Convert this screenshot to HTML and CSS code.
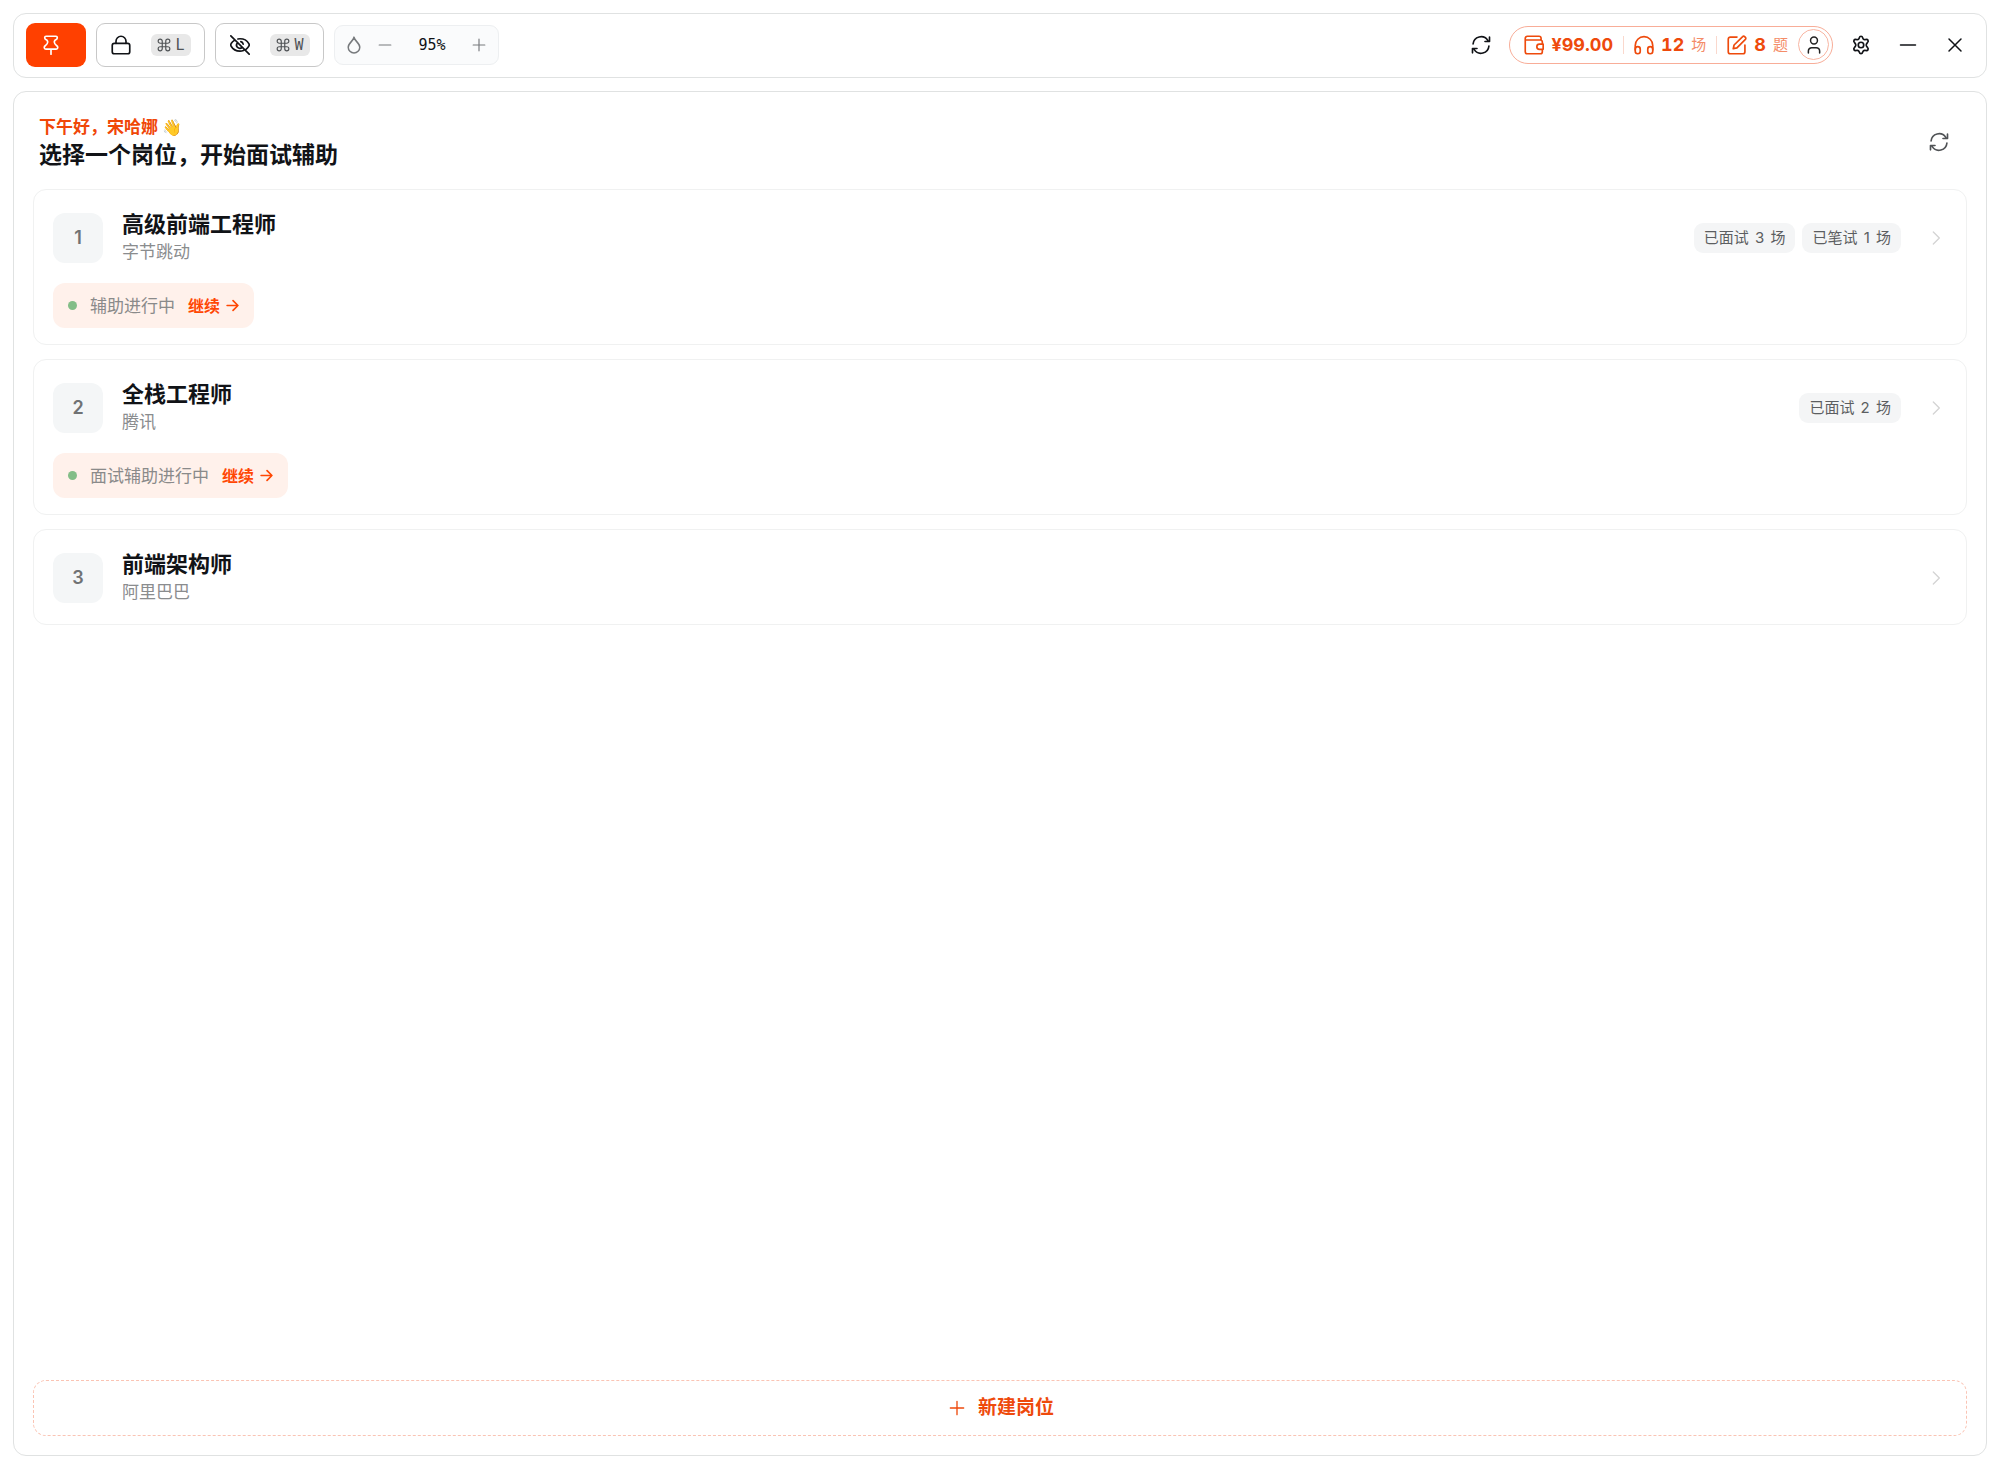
FILE: index.html
```
<!DOCTYPE html>
<html lang="zh-CN">
<head>
<meta charset="utf-8">
<meta name="viewport" content="width=device-width, initial-scale=1">
<title>面试辅助</title>
<link rel="stylesheet" href="styles.css">
</head>
<body>
<svg class="sprite" aria-hidden="true">
  <symbol id="refresh" viewBox="0 0 24 24"><path d="M2.500 10.800a9.600 9.600 0 0 1 17.600-4.400M21.500 13.200a9.600 9.600 0 0 1-17.600 4.400M22.200 2.600v5.200h-5.400M1.800 21.400v-5.200h5.400"/></symbol>
  <symbol id="chevron" viewBox="0 0 24 24"><path d="m8 3 9 9-9 9"/></symbol>
  <symbol id="arrow" viewBox="0 0 24 24"><path d="M2 12h20M13 3l9 9-9 9"/></symbol>
  <symbol id="plus" viewBox="0 0 24 24"><path d="M12 2v20M2 12h20"/></symbol>
  <symbol id="minus" viewBox="0 0 24 24"><path d="M2 12h20"/></symbol>
  <symbol id="command" viewBox="0 0 24 24"><path d="M9 9V5.500A3.500 3.500 0 1 0 5.500 9h13A3.500 3.500 0 1 0 15 5.500v13a3.500 3.500 0 1 0 3.500-3.500h-13A3.500 3.500 0 1 0 9 18.500Z"/></symbol>
</svg>

<header class="toolbar">
  <div class="group">
    <button class="pin" type="button" aria-label="置顶">
      <svg class="icon icon-l" viewBox="0 0 24 24"><path d="M6 1.500h12c2 0 2 3.200.3 3.800-2 .7-2.500 1.400-2.300 3.400.2 1.800.9 2.800 2.600 3.900 2.200 1.500 2 4.400-.4 4.400H5.800c-2.400 0-2.600-2.900-.4-4.400C7.100 11.500 7.800 10.500 8 8.700c.2-2-.3-2.700-2.300-3.400C4 4.700 4 1.500 6 1.500ZM12 17v6"/></svg>
    </button>
    <button class="shortcut" type="button" aria-label="锁定">
      <svg class="icon icon-l" viewBox="0 0 24 24"><rect x="1.500" y="10" width="21" height="12.500" rx="2.500"/><path d="M6 10V7.500a6 6 0 0 1 12 0V10"/></svg>
      <kbd><svg class="icon cmd"><use href="#command"/></svg>L</kbd>
    </button>
    <button class="shortcut" type="button" aria-label="隐藏">
      <svg class="icon icon-l" viewBox="0 0 24 24"><path d="M1 1l22 22M9.500 4.800A11 11 0 0 1 12 4.500c5 0 9 3 10.600 5.800.6 1 .6 2 0 3A14 14 0 0 1 19.500 17M5.200 6.500a14 14 0 0 0-3.800 3.800c-.6 1-.6 2.200 0 3.200C3 16.300 7 19.300 12 19.300c1.500 0 2.900-.3 4.200-.8M9 9.500a3.800 3.800 0 0 0 5.500 5.300M13 8a3.800 3.800 0 0 1 2.800 3"/></svg>
      <kbd><svg class="icon cmd"><use href="#command"/></svg>W</kbd>
    </button>
    <div class="opacity" role="group" aria-label="透明度">
      <svg class="icon icon-m thin" viewBox="0 0 24 24"><path d="M12 1.500c.4 2.200 1.800 4 3.600 6 2.200 2.400 4.100 4.800 4.100 7.400a7.700 7.700 0 0 1-15.400 0c0-2.600 1.900-5 4.100-7.400 1.800-2 3.200-3.800 3.600-6Z"/></svg>
      <button class="step" type="button" aria-label="降低"><svg class="icon thin"><use href="#minus"/></svg></button>
      <output>95%</output>
      <button class="step" type="button" aria-label="提高"><svg class="icon thin"><use href="#plus"/></svg></button>
    </div>
  </div>

  <div class="group tools">
    <button class="tool" type="button" aria-label="刷新"><svg class="icon icon-l"><use href="#refresh"/></svg></button>
    <div class="account">
      <span class="stat">
        <svg class="icon icon-l" viewBox="0 0 24 24"><path d="M22 10V8.500a2.500 2.500 0 0 0-2.500-2.500H1.500M20.500 6V4a2.500 2.500 0 0 0-2.500-2.500H4A2.500 2.500 0 0 0 1.500 4v16A2.500 2.500 0 0 0 4 22.500h15.500A2.500 2.500 0 0 0 22 20v-2M23 11h-4.500a3 3 0 0 0 0 6.200H23z"/></svg>
        <b>¥99.00</b>
      </span>
      <span class="stat">
        <svg class="icon icon-l" viewBox="0 0 24 24"><path d="M1.500 18v-5.500a10.500 10.500 0 0 1 21 0V18"/><rect x="1.500" y="14" width="6" height="8.500" rx="3"/><rect x="16.500" y="14" width="6" height="8.500" rx="3"/></svg>
        <b>12</b><small>场</small>
      </span>
      <span class="stat">
        <svg class="icon icon-l" viewBox="0 0 24 24"><path d="M12 2.500H4A2.500 2.500 0 0 0 1.500 5v15A2.500 2.500 0 0 0 4 22.500h15a2.500 2.500 0 0 0 2.500-2.500v-8M7.500 16.500l1-4.500L18.800 1.900a1.600 1.600 0 0 1 2.300 0l1 1a1.600 1.600 0 0 1 0 2.300L11.900 15.500z"/></svg>
        <b>8</b><small>题</small>
      </span>
      <button class="avatar" type="button" aria-label="账户">
        <svg class="icon icon-m" viewBox="0 0 24 24"><circle cx="12" cy="6" r="4.600"/><path d="M4.500 22.500V20A4.500 4.500 0 0 1 9 15.500h6a4.500 4.500 0 0 1 4.500 4.500v2.500"/></svg>
      </button>
    </div>
    <button class="tool" type="button" aria-label="设置"><svg class="icon icon-l" viewBox="0 0 24 24"><path d="M12 1.500c1.600 0 1.800 1 2.200 2.300.4 1.300 1.700 2 3 1.700 1.400-.3 2.400-.6 3.200.8.8 1.400 0 2.100-.9 3.100-.9 1-1.300 1.500-1.300 2.600s.4 1.600 1.300 2.600c.9 1 1.700 1.700.9 3.100-.8 1.400-1.800 1.100-3.200.8-1.300-.3-2.600.4-3 1.700-.4 1.300-.6 2.300-2.200 2.300s-1.800-1-2.200-2.300c-.4-1.300-1.700-2-3-1.700-1.400.3-2.400.6-3.200-.8-.8-1.400 0-2.100.9-3.100.9-1 1.300-1.500 1.300-2.600S5.400 10.400 4.500 9.400c-.9-1-1.700-1.700-.9-3.100.8-1.400 1.800-1.100 3.200-.8 1.300.3 2.600-.4 3-1.700.4-1.300.6-2.300 2.200-2.300Z"/><circle cx="12" cy="12" r="3.300"/></svg></button>
    <button class="tool" type="button" aria-label="最小化"><svg class="icon icon-m"><use href="#minus"/></svg></button>
    <button class="tool" type="button" aria-label="关闭"><svg class="icon icon-m" viewBox="0 0 24 24"><path d="M4 4l16 16M20 4 4 20"/></svg></button>
  </div>
</header>

<main class="panel">
  <div class="heading">
    <div>
      <p class="greeting">下午好，宋哈娜 <span class="wave">👋</span></p>
      <h1>选择一个岗位，开始面试辅助</h1>
    </div>
    <button class="reload" type="button" aria-label="刷新岗位"><svg class="icon icon-l"><use href="#refresh"/></svg></button>
  </div>

  <ul class="jobs">
    <li class="job">
      <div class="row">
        <span class="index">1</span>
        <div class="name"><h2>高级前端工程师</h2><p>字节跳动</p></div>
        <span class="tag">已面试 <span class="count">3</span> 场</span>
        <span class="tag">已笔试 <span class="count">1</span> 场</span>
        <svg class="icon go"><use href="#chevron"/></svg>
      </div>
      <div class="status"><i class="dot"></i><span>辅助进行中</span><a href="#job-1">继续<svg class="icon arrow"><use href="#arrow"/></svg></a></div>
    </li>
    <li class="job">
      <div class="row">
        <span class="index">2</span>
        <div class="name"><h2>全栈工程师</h2><p>腾讯</p></div>
        <span class="tag">已面试 <span class="count">2</span> 场</span>
        <svg class="icon go"><use href="#chevron"/></svg>
      </div>
      <div class="status"><i class="dot"></i><span>面试辅助进行中</span><a href="#job-2">继续<svg class="icon arrow"><use href="#arrow"/></svg></a></div>
    </li>
    <li class="job">
      <div class="row">
        <span class="index">3</span>
        <div class="name"><h2>前端架构师</h2><p>阿里巴巴</p></div>
        <svg class="icon go"><use href="#chevron"/></svg>
      </div>
    </li>
  </ul>

  <button class="create" type="button"><svg class="icon icon-s"><use href="#plus"/></svg>新建岗位</button>
</main>
</body>
</html>
```
FILE: styles.css
```
* { box-sizing: border-box; margin: 0; padding: 0; }

body {
  min-height: 100vh;
  padding: 13px;
  display: flex;
  flex-direction: column;
  gap: 13px;
  background: #fff;
  color: #111317;
  font-family: Inter, "Noto Sans CJK SC", sans-serif;
  font-size: 17px;
  line-height: 24px;
}

button { font: inherit; color: inherit; background: none; border: 0; cursor: pointer; }

.sprite { display: none; }
.icon {
  width: 20px;
  height: 20px;
  flex: none;
  fill: none;
  stroke: currentColor;
  stroke-width: 2;
  stroke-linecap: round;
  stroke-linejoin: round;
}
.icon-m { width: 18px; height: 18px; }
.icon-s { width: 16px; height: 16px; }
.thin { stroke-width: 2; }

/* Top toolbar */
.toolbar {
  display: flex;
  justify-content: space-between;
  align-items: center;
  height: 65px;
  padding: 0 12px 2px;
  border: 1px solid #e0e2e2;
  border-radius: 13px;
}
.group { display: flex; align-items: center; gap: 10px; }

.pin, .shortcut {
  display: flex;
  align-items: center;
  height: 44px;
  border-radius: 9px;
}
.pin {
  width: 60px;
  padding-left: 15px;
  background: #ff4000;
  color: #fff;
}
.shortcut {
  justify-content: space-between;
  width: 109px;
  padding: 0 13px 0 14px;
  border: 1px solid #c8c8c8;
}
kbd {
  display: flex;
  align-items: center;
  justify-content: center;
  gap: 4px;
  width: 40px;
  height: 22px;
  border-radius: 6px;
  background: #e8e8e8;
  color: #505356;
  font: 15px/22px "DejaVu Sans Mono", monospace;
}
.cmd { width: 14px; height: 14px; }

.opacity {
  display: flex;
  align-items: center;
  height: 40px;
  width: 165px;
  padding: 0 10px;
  border: 1px solid #edeff1;
  border-radius: 9px;
  background: #fafbfc;
  color: #777a7d;
}
.step { display: flex; justify-content: center; width: 18px; }
.step .icon { width: 14px; height: 14px; }
.opacity .step:first-of-type { margin-left: 13px; }
.opacity output {
  flex: 1;
  text-align: center;
  color: #111317;
  font: 500 15px/20px "DejaVu Sans Mono", monospace;
}

.tools { gap: 9px; }
.tool { display: flex; align-items: center; justify-content: center; width: 38px; height: 38px; }

.account {
  display: flex;
  align-items: center;
  height: 38px;
  padding: 0 3px 0 14px;
  border: 1px solid #f8ad98;
  border-radius: 19px;
  color: #ee4a0c;
}
.stat { display: flex; align-items: center; gap: 7px; padding-right: 10px; }
.stat b { font-weight: 700; font-size: 18px; font-variant-numeric: tabular-nums; }
.stat small { font-size: 15px; color: #f48c68; }
.stat + .stat::before { content: ""; width: 1px; height: 18px; margin-right: 3px; background: #fad8cd; }
.avatar {
  display: flex;
  align-items: center;
  justify-content: center;
  width: 31px;
  height: 31px;
  border: 1px solid #f8b5a2;
  border-radius: 50%;
  color: #222;
}

/* Job list panel */
.panel {
  flex: 1;
  display: flex;
  flex-direction: column;
  padding: 22px 19px 19px;
  border: 1px solid #e0e2e2;
  border-radius: 13px;
}
.heading {
  display: flex;
  justify-content: space-between;
  align-items: center;
  padding: 0 18px 0 6px;
  margin-bottom: 20px;
}
.greeting { color: #f04708; font-weight: 700; line-height: 26px; }
.wave { font-family: "Noto Color Emoji", sans-serif; font-size: 16px; }
h1 { font-size: 23px; line-height: 28px; font-weight: 700; }
.reload { display: flex; color: #505356; }

.jobs { list-style: none; display: flex; flex-direction: column; gap: 14px; }
.job { padding: 20px 19px 16px; border: 1px solid #f0f1f1; border-radius: 13px; }
.job:last-child { padding-bottom: 18px; }
.row { display: flex; align-items: center; gap: 7px; }
.index {
  width: 50px;
  height: 50px;
  border-radius: 12px;
  background: #f4f6f7;
  color: #707274;
  font-weight: 600;
  font-size: 18px;
  line-height: 50px;
  text-align: center;
}
.name { flex: 1; padding-left: 12px; }
h2 { font-size: 22px; line-height: 28px; font-weight: 700; }
.name p { color: #8a8c8e; line-height: 28px; }
.tag {
  height: 30px;
  padding: 0 10px;
  border-radius: 9px;
  background: #f4f5f6;
  color: #5c5e61;
  font-size: 15px;
  line-height: 30px;
}
.count { margin: 0 2px; }
.go { width: 16px; height: 16px; margin: 0 3px 0 20px; color: #d4d4d4; }

.status {
  display: flex;
  align-items: center;
  width: fit-content;
  height: 45px;
  margin-top: 17px;
  padding: 0 15px;
  border-radius: 12px;
  background: #fff1eb;
  color: #8a8a8a;
}
.dot { width: 9px; height: 9px; margin-right: 13px; border-radius: 50%; background: #83be88; }
.status a {
  display: flex;
  align-items: center;
  gap: 6px;
  margin-left: 13px;
  color: #ff4703;
  font-size: 16px;
  font-weight: 700;
  text-decoration: none;
}
.arrow { width: 13px; height: 13px; stroke-width: 3; }

.create {
  display: flex;
  align-items: center;
  justify-content: center;
  gap: 13px;
  height: 56px;
  margin-top: auto;
  padding-left: 3px;
  border: 1px dashed #fac4b4;
  border-radius: 13px;
  color: #ee4a0c;
  font-size: 19px;
  font-weight: 700;
}
```
